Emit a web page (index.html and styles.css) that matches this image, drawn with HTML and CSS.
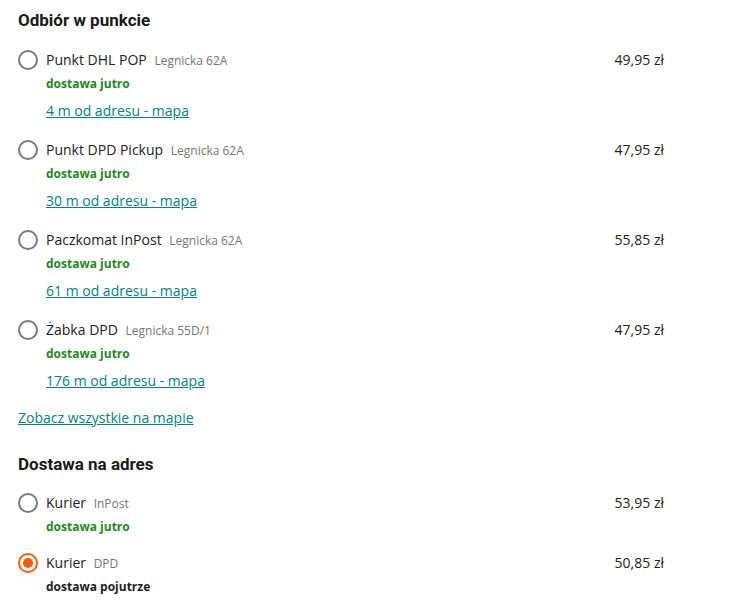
FILE: index.html
```html
<!DOCTYPE html>
<html lang="pl">
<head>
    <meta charset="UTF-8">
    <title>Dostawa</title>
    <link rel="stylesheet" href="styles.css">
</head>
<body>
    <div class="delivery">
        <h2 class="section-title">Odbiór w punkcie</h2>

        <div class="option">
            <span class="radio"></span>
            <div class="option-body">
                <div class="option-name">Punkt DHL POP <span class="option-sub">Legnicka 62A</span></div>
                <div class="eta">dostawa jutro</div>
                <a href="#" class="map-link">4 m od adresu - mapa</a>
            </div>
            <div class="price">49,95 zł</div>
        </div>

        <div class="option">
            <span class="radio"></span>
            <div class="option-body">
                <div class="option-name">Punkt DPD Pickup <span class="option-sub">Legnicka 62A</span></div>
                <div class="eta">dostawa jutro</div>
                <a href="#" class="map-link">30 m od adresu - mapa</a>
            </div>
            <div class="price">47,95 zł</div>
        </div>

        <div class="option">
            <span class="radio"></span>
            <div class="option-body">
                <div class="option-name">Paczkomat InPost <span class="option-sub">Legnicka 62A</span></div>
                <div class="eta">dostawa jutro</div>
                <a href="#" class="map-link">61 m od adresu - mapa</a>
            </div>
            <div class="price">55,85 zł</div>
        </div>

        <div class="option">
            <span class="radio"></span>
            <div class="option-body">
                <div class="option-name">Żabka DPD <span class="option-sub">Legnicka 55D/1</span></div>
                <div class="eta">dostawa jutro</div>
                <a href="#" class="map-link">176 m od adresu - mapa</a>
            </div>
            <div class="price">47,95 zł</div>
        </div>

        <a href="#" class="all-link">Zobacz wszystkie na mapie</a>

        <h2 class="section-title second">Dostawa na adres</h2>

        <div class="option compact">
            <span class="radio"></span>
            <div class="option-body">
                <div class="option-name">Kurier <span class="option-sub">InPost</span></div>
                <div class="eta">dostawa jutro</div>
            </div>
            <div class="price">53,95 zł</div>
        </div>

        <div class="option compact">
            <span class="radio checked"></span>
            <div class="option-body">
                <div class="option-name">Kurier <span class="option-sub">DPD</span></div>
                <div class="eta dark">dostawa pojutrze</div>
            </div>
            <div class="price">50,85 zł</div>
        </div>
    </div>
</body>
</html>
```

FILE: styles.css
```css
body {
    margin: 0;
    background: #fff;
    font-family: "Open Sans", Arial, sans-serif;
    color: #222;
}

.delivery {
    width: 646px;
    padding: 8px 0 0 18px;
}

.section-title {
    font-family: Roboto, Arial, sans-serif;
    font-size: 17px;
    font-weight: 700;
    color: #1a1a1a;
    margin: 0 0 18px;
    line-height: 24px;
}

.section-title.second {
    margin-top: 24px;
    margin-bottom: 17px;
}

.option {
    display: flex;
    align-items: flex-start;
    margin-bottom: 19px;
}

.option.compact {
    margin-bottom: 18px;
}

.radio {
    width: 16px;
    height: 16px;
    border: 2px solid #7a7a7a;
    border-radius: 50%;
    flex: none;
    margin: 0 8px 0 0;
    position: relative;
}

.radio.checked {
    border-color: #ff5a00;
}

.radio.checked::after {
    content: '';
    position: absolute;
    left: 3px;
    top: 3px;
    width: 10px;
    height: 10px;
    border-radius: 50%;
    background: #ff5a00;
}

.option-body {
    flex: 1;
}

.option-name {
    font-size: 14px;
    line-height: 20px;
    color: #222;
}

.option-sub {
    font-size: 12px;
    color: #767676;
    margin-left: 4px;
}

.eta {
    font-size: 12px;
    font-weight: 700;
    color: #1b8a1b;
    line-height: 16px;
    margin-top: 5px;
}

.eta.dark {
    color: #222;
}

.map-link,
.all-link {
    display: inline-block;
    font-size: 14px;
    line-height: 20px;
    color: #00837f;
    text-decoration: underline;
    margin-top: 9px;
}

.all-link {
    display: block;
    width: max-content;
    margin-top: -2px;
}

.price {
    font-size: 14px;
    line-height: 20px;
    color: #222;
    text-align: right;
}
```
